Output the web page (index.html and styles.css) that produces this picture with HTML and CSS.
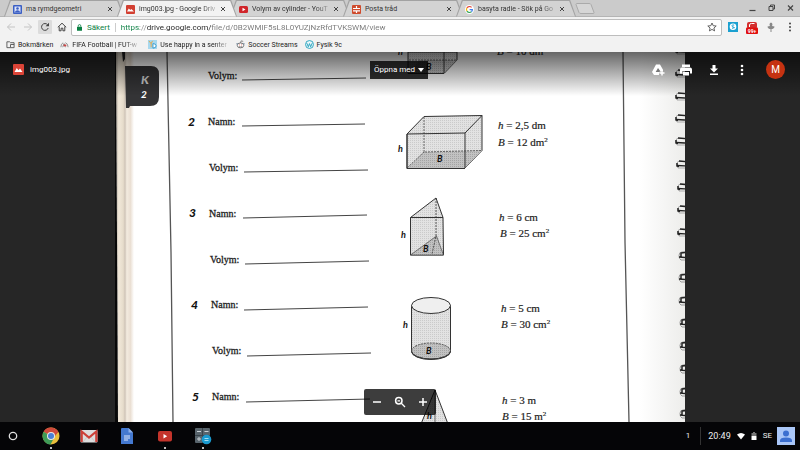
FILE: index.html
```html
<!DOCTYPE html>
<html lang="sv">
<head>
<meta charset="utf-8">
<meta name="viewport" content="width=device-width, initial-scale=1">
<title>img003.jpg - Google Drive</title>
<link rel="stylesheet" href="styles.css">
</head>
<body>
<header class="browser">
  <div class="tabstrip">
    <div class="tab">
      <svg class="favicon" viewBox="0 0 9 9"><rect width="9" height="9" rx="1" fill="#3b5fc4"/><rect x="1.5" y="1.5" width="6" height="6" fill="#dfe6fa"/><circle cx="4.5" cy="3.5" r="1.3" fill="#3b5fc4"/><path d="M2 7.5c0-3 5-3 5 0z" fill="#3b5fc4"/></svg>
      <button class="tab-title">ma rymdgeometri</button>
      <button class="close" aria-label="Stäng"><svg viewBox="0 0 6 6"><path d="M1 1l4 4M5 1L1 5"/></svg></button>
    </div>
    <div class="tab active">
      <svg class="favicon" viewBox="0 0 9 9"><rect width="9" height="9" rx="1" fill="#d23f31"/><path d="M1 6.500l1.800-3 1.500 1.600 1-1.200L8 6.500z" fill="#fff"/></svg>
      <button class="tab-title fade">img003.jpg - Google Driv</button>
      <button class="close" aria-label="Stäng"><svg viewBox="0 0 6 6"><path d="M1 1l4 4M5 1L1 5"/></svg></button>
    </div>
    <div class="tab">
      <svg class="favicon" viewBox="0 0 9 9"><rect y="1" width="9" height="7" rx="1.500" fill="#d0252a"/><path d="M3.500 2.800v3.400l3-1.700z" fill="#fff"/></svg>
      <button class="tab-title fade">Volym av cylinder - YouT</button>
      <button class="close" aria-label="Stäng"><svg viewBox="0 0 6 6"><path d="M1 1l4 4M5 1L1 5"/></svg></button>
    </div>
    <div class="tab">
      <svg class="favicon" viewBox="0 0 9 9"><rect width="9" height="9" rx="1" fill="#cf4b2c"/><path d="M1 3.500h7M1 5.800h7M4.500 1v2.500M4.500 5.500V8" stroke="#fff" stroke-width="1.200"/></svg>
      <button class="tab-title">Posta tråd</button>
      <button class="close" aria-label="Stäng"><svg viewBox="0 0 6 6"><path d="M1 1l4 4M5 1L1 5"/></svg></button>
    </div>
    <div class="tab">
      <svg class="favicon" viewBox="0 0 9 9"><circle cx="4.500" cy="4.500" r="4.500" fill="#fff"/><g fill="none" stroke-width="1.200"><path d="M6.600 2.400A3 3 0 0 0 1.900 3" stroke="#e54335"/><path d="M1.900 3a3 3 0 0 0 0 3" stroke="#f6b704"/><path d="M1.900 6a3 3 0 0 0 4.500.800" stroke="#34a353"/><path d="M6.400 6.800a3 3 0 0 0 1-2.200H4.600" stroke="#4280ef"/></g></svg>
      <button class="tab-title fade">basyta radie - Sök på Go</button>
      <button class="close" aria-label="Stäng"><svg viewBox="0 0 6 6"><path d="M1 1l4 4M5 1L1 5"/></svg></button>
    </div>
    <button class="new-tab" aria-label="Ny flik"><svg viewBox="0 0 20 11"><path d="M1 1.500q0-1 1-1h12q1.500 0 2 1l3 8q.3 1-1 1H6q-1.500 0-2-1z" fill="#d6d6d6" stroke="#aaa"/></svg></button>
    <div class="window-controls">
      <button aria-label="Minimera"><svg viewBox="0 0 8 8"><path d="M1 6.500h6" stroke-width="1.200"/></svg></button>
      <button aria-label="Återställ"><svg viewBox="0 0 8 8"><path d="M1.500 2.500h4v4h-4zM3 2.500V1h4v4H5.500"/></svg></button>
      <button aria-label="Stäng fönster"><svg viewBox="0 0 8 8"><path d="M1.500 1.500l5 5M6.500 1.500l-5 5" stroke-width="1.200"/></svg></button>
    </div>
  </div>
  <div class="toolbar">
    <div class="nav">
      <button class="off" aria-label="Bakåt"><svg viewBox="0 0 10 10"><path d="M9 5H1.500M5 1.500L1.500 5 5 8.500"/></svg></button>
      <button class="off" aria-label="Framåt"><svg viewBox="0 0 10 10"><path d="M1 5h7.500M5 1.500L8.500 5 5 8.500"/></svg></button>
      <button class="pressed" aria-label="Uppdatera"><svg viewBox="0 0 10 10"><path d="M8.200 6A3.400 3.400 0 1 1 7.600 2.800"/><path d="M9 .800v3.400H5.600z" fill="#444" stroke="none"/></svg></button>
      <button aria-label="Hem"><svg viewBox="0 0 10 10"><path d="M.800 5.300L5 1.200l4.200 4.100M2.200 4.500v4.300h1.900V6.200h1.800v2.600h1.900V4.500"/></svg></button>
    </div>
    <div class="omnibox">
      <svg class="lock" viewBox="0 0 6 8"><rect y="3" width="6" height="5" rx=".500" fill="#0b8043"/><path d="M1.500 3V2a1.500 1.500 0 0 1 3 0v1" fill="none" stroke="#0b8043"/></svg>
      <label class="secure" for="url">Säkert</label>
      <input id="url" class="url" type="text" value="https://drive.google.com/file/d/0B2WMIF5sL8L0YUZjNzRfdTVKSWM/view">
      <button class="star" aria-label="Bokmärk"><svg viewBox="0 0 10 10"><path d="M5 1l1.200 2.700 3 .300-2.300 2 .700 2.900L5 7.400 2.400 8.900l.700-2.900L.800 4l3-.300z" fill="none" stroke="#555" stroke-width=".900"/></svg></button>
    </div>
    <div class="extensions">
      <button aria-label="Skype"><svg viewBox="0 0 12 14"><rect x="1" y="2" width="10" height="10" fill="#1ba0d0"/><circle cx="6" cy="6.700" r="3.300" fill="#fff"/><path d="M7.200 5.200Q5 4.300 5 5.700t2 1.600-2 1" fill="none" stroke="#1ba0d0"/></svg></button>
      <button aria-label="Meddelanden"><svg viewBox="0 0 12 14"><rect x="1" y="2" width="10" height="7" rx="2" fill="#d32f2f"/><path d="M3.500 7V5q0-1.500 2-1.500h3" fill="none" stroke="#fff"/><rect y="7.500" width="12" height="6.500" rx="1" fill="#e01010"/><text x="6" y="13" class="badge">99+</text></svg></button>
      <button aria-label="Tillägg"><svg viewBox="0 0 12 14"><path d="M6 2.500c2 1 1.500 2.500 1 3.500l2.500.500c0 2-2 2.500-3 2.500L6.500 12h-1V9c-1 0-3-.500-3-2.500L5 6c-.500-1-1-2.500 1-3.500z" fill="#888"/></svg></button>
      <button aria-label="Meny"><svg viewBox="0 0 12 14"><g fill="#444"><circle cx="6" cy="3.500" r="1"/><circle cx="6" cy="7" r="1"/><circle cx="6" cy="10.500" r="1"/></g></svg></button>
    </div>
  </div>
  <nav class="bookmarks">
    <a href="#"><svg viewBox="0 0 10 10"><path d="M1 2h3l1 1h4v5.500H1zM5 8V5h4" fill="none" stroke="#555"/></svg><span>Bokmärken</span></a>
    <a href="#" class="long"><svg viewBox="0 0 10 10"><path d="M1 8q0-4 2.500-5M3 8l1.500-4L6 8M6 3q3 1 3 5" fill="none" stroke="#888"/><path d="M4 5h3v2H4z" fill="#c44"/></svg><span class="fade">FIFA Football | FUT-w</span></a>
    <a href="#" class="long"><svg viewBox="0 0 10 10"><rect width="10" height="10" fill="#a7d8ee"/><path d="M1 1l2.500 3L5 1M3.500 4v4" fill="none" stroke="#e8a33d"/><path d="M5.500 4v5q3.500 0 3.500-2.500T5.500 4z" fill="#fff" stroke="#2b93c8"/></svg><span class="fade">Use happy in a senter</span></a>
    <a href="#"><svg viewBox="0 0 10 10"><ellipse cx="5" cy="6" rx="3.600" ry="2.700" fill="#fff" stroke="#666"/><circle cx="1.300" cy="4.300" r="1" fill="#89a"/><circle cx="8.700" cy="4.300" r="1" fill="#89a"/><path d="M5 3.300L5.700 1 8 1.500M3.500 7.200q1.500 1 3 0" fill="none" stroke="#666" stroke-width=".800"/><path d="M3.500 5.500h.8M5.800 5.500h.8" stroke="#d43"/></svg><span>Soccer Streams</span></a>
    <a href="#"><svg viewBox="0 0 10 10"><circle cx="5" cy="5" r="4.400" fill="#e8f6f9" stroke="#21a0bd"/><path d="M2 3.500l1.700 4L5 4l1.300 3.500L8 3.500" fill="none" stroke="#21a0bd"/></svg><span>Fysik 9c</span></a>
  </nav>
</header>

<main class="viewer">
  <svg class="scan" viewBox="115 52 570 370" role="img" aria-label="Arbetsblad">
    <defs>
      <pattern id="dots" width="2" height="2" patternUnits="userSpaceOnUse"><rect width="2" height="2" fill="#e2e2e2"/><rect width="1" height="1" fill="#cacaca"/></pattern>
      <pattern id="dense" width="2" height="2" patternUnits="userSpaceOnUse"><rect width="2" height="2" fill="#c2c2c2"/><rect width="1" height="1" fill="#a4a4a4"/></pattern>
      <linearGradient id="spine"><stop offset="0" stop-color="#b5ac9f"/><stop offset=".15" stop-color="#f1e8d9"/><stop offset=".4" stop-color="#e6dccb"/><stop offset=".5" stop-color="#cfc4b8"/><stop offset=".6" stop-color="#f3ebdf"/><stop offset=".8" stop-color="#eadfd3"/><stop offset="1" stop-color="#fff"/></linearGradient>
      <linearGradient id="edge"><stop offset="0" stop-color="#fff"/><stop offset="1" stop-color="#ededeb"/></linearGradient>
      <g id="ring"><path d="M10 1H4Q1 1 1 4t1 4h8" fill="none" stroke="#aaa"/><path d="M3 1l7 .700M1 5.500l9 .500" stroke="#222" stroke-width="1.300"/><path d="M1 3v3l2 .500" fill="none" stroke="#222" stroke-width="1.500"/></g>
      <g id="hook"><path d="M7 1H4Q1 1 1 4.500T3 9h4" fill="none" stroke="#999"/><path d="M3 2l4-.500M3 1.500v5M1 6l6 .500" stroke="#222" stroke-width="1.500"/></g>
    </defs>
    <rect x="115" y="52" width="570" height="370" fill="#fff"/>
    <path d="M116 52h18v370h-16z" fill="url(#spine)"/>
    <path d="M115 52h1l2 370h-3z" fill="#080808"/>
    <rect x="640" y="52" width="45" height="370" fill="url(#edge)"/>
    <path d="M122 52h3v7l-2 3z" fill="#222"/>
    <path d="M125 66h26q8 0 8 8v23q0 9-9 9h-20l-1 2h-3z" fill="#343436"/>
    <g class="tag"><text x="141" y="84" class="tag-letter">K</text><text x="141" y="98" class="tag-number">2</text></g>
    <path d="M167 52l4 200 2 170M623 52l2 190 4 180" fill="none" stroke="#555" stroke-width="1.300"/>

    <g stroke="#444" stroke-width="1">
      <path d="M242 80l124-2M242 126l123-2M244 172l124-2M243 218l124-3M245 264l124-3M244 310l124-3M247 356l124-3M246 402l124-3"/>
    </g>
    <g class="label">
      <text x="208" y="79">Volym:</text>
      <text x="208" y="125">Namn:</text><text x="209" y="171">Volym:</text>
      <text x="209" y="217">Namn:</text><text x="210" y="263">Volym:</text>
      <text x="211" y="308">Namn:</text><text x="212" y="354">Volym:</text>
      <text x="212" y="400">Namn:</text>
    </g>
    <g class="number">
      <text x="188" y="126">2</text><text x="189" y="217">3</text><text x="191" y="309">4</text><text x="192" y="401">5</text>
    </g>
    <g class="formula">
      <text x="497" y="55"><tspan class="var">B</tspan> = 10 dm</text>
      <text x="498" y="129"><tspan class="var">h</tspan> = 2,5 dm</text><text x="498" y="146"><tspan class="var">B</tspan> = 12 dm<tspan class="sup" dy="-4">2</tspan></text>
      <text x="499" y="221"><tspan class="var">h</tspan> = 6 cm</text><text x="500" y="237"><tspan class="var">B</tspan> = 25 cm<tspan class="sup" dy="-4">2</tspan></text>
      <text x="501" y="312"><tspan class="var">h</tspan> = 5 cm</text><text x="501" y="328"><tspan class="var">B</tspan> = 30 cm<tspan class="sup" dy="-4">2</tspan></text>
      <text x="502" y="404"><tspan class="var">h</tspan> = 3 m</text><text x="502" y="420"><tspan class="var">B</tspan> = 15 m<tspan class="sup" dy="-4">2</tspan></text>
    </g>

    <g stroke="#333" stroke-width="1" stroke-linejoin="round">
      <path d="M408 52h49v8l-13 13.500h-36z" fill="url(#dots)"/>
      <path d="M408 73l12-13h37l-13 13z" fill="url(#dense)" stroke="none"/><path d="M444 52v21" /><path d="M409 60h48" stroke-dasharray="2 1" stroke-width=".700"/>

      <path d="M407 134l17-17.500 58-1v35L465 168l-58 .500z" fill="url(#dots)"/>
      <path d="M407 168.500L424 152l58-1.500L465 168z" fill="url(#dense)" stroke="none"/>
      <path d="M407 134l58-1v35M465 133l17-17.500M407 134v34.500h58" fill="none"/>
      <path d="M424 117v35l58-1.500M424 152l-17 16" fill="none" stroke-dasharray="2 1" stroke-width=".700"/>

      <path d="M410.500 217.500L436 198l7 19.500.5 37.500h-33z" fill="url(#dots)"/>
      <path d="M410.500 255L436.500 236l7 19z" fill="url(#dense)" stroke-width=".600"/>
      <path d="M410.500 217.500H443" fill="none"/><path d="M436 198v38l-4 18" fill="none" stroke-dasharray="2 1" stroke-width=".800"/>

      <path d="M411.500 305.500v46a19.500 8 0 0 0 39 0v-46z" fill="url(#dots)"/>
      <ellipse cx="431" cy="351" rx="19.500" ry="8" fill="url(#dense)" stroke-width=".800" stroke-dasharray="2 1"/>
      <ellipse cx="431" cy="305.500" rx="19.500" ry="8" fill="#efefef"/>
      <path d="M411.500 351a19.500 8 0 0 0 39 0" fill="none"/>

      <path d="M435 390l-14 34h27z" fill="url(#dots)"/><path d="M435 390v32" stroke-width=".700"/>
    </g>
    <g class="mark">
      <text x="398" y="55">h</text><text x="426" y="70">B</text>
      <text x="398" y="152">h</text><text x="437" y="162">B</text>
      <text x="401" y="238">h</text><text x="423" y="252">B</text>
      <text x="403" y="328">h</text><text x="426" y="354">B</text>
      <text x="427" y="419">h</text>
    </g>
    <g>
      <use href="#ring" x="675" y="46"/><use href="#ring" x="675" y="69"/><use href="#ring" x="675" y="92"/><use href="#ring" x="675" y="114"/><use href="#ring" x="675" y="137"/><use href="#ring" x="676" y="160"/><use href="#ring" x="677" y="183"/><use href="#ring" x="677" y="205"/><use href="#ring" x="677" y="228"/>
      <use href="#hook" x="678" y="251"/><use href="#hook" x="678" y="273"/><use href="#hook" x="678" y="296"/><use href="#hook" x="679" y="318"/><use href="#hook" x="679" y="341"/><use href="#hook" x="679" y="364"/><use href="#hook" x="679" y="387"/><use href="#hook" x="679" y="409"/>
    </g>
  </svg>

  <div class="viewer-bar">
    <div class="file">
      <svg viewBox="0 0 11 11"><rect width="11" height="11" rx="1" fill="#db4437"/><path d="M1.500 8l2.300-4 1.700 2.300L7 4.500 9.500 8z" fill="#fff"/></svg>
      <span>img003.jpg</span>
    </div>
    <button class="open-with">Öppna med <svg viewBox="0 0 6 4"><path d="M0 0h6L3 4z" fill="#fff"/></svg></button>
    <div class="actions">
      <button aria-label="Lägg till i Drive"><svg viewBox="0 0 14 14"><path d="M5 1.500h4l3 5.300V8H9.500v1.500H8V12H3L1 9z" fill="#fff"/><path d="M7 5L4.700 9h3.800l.700-1z" fill="#777"/><path d="M11 7.500v5M8.500 10h5" stroke="#fff" stroke-width="1.500"/></svg></button>
      <button aria-label="Skriv ut"><svg viewBox="0 0 14 14"><path d="M3 1.500h8V4H3zM3 4.500h8a2 2 0 0 1 2 2v4h-2V8H3v2.500H1v-4a2 2 0 0 1 2-2zM4 9h6v3.500H4z" fill="#fff"/></svg></button>
      <button aria-label="Ladda ned"><svg viewBox="0 0 14 14"><path d="M5.500 2h3v3.500H11l-4 4-4-4h2.500zM3 10.500h8V12H3z" fill="#fff"/></svg></button>
      <button aria-label="Fler åtgärder"><svg viewBox="0 0 14 14"><g fill="#fff"><circle cx="7" cy="3" r="1.300"/><circle cx="7" cy="7" r="1.300"/><circle cx="7" cy="11" r="1.300"/></g></svg></button>
      <button class="account">M</button>
    </div>
  </div>

  <div class="zoombar">
    <button aria-label="Zooma ut"><svg viewBox="0 0 12 12"><path d="M2 6h8"/></svg></button>
    <button aria-label="Anpassa"><svg viewBox="0 0 12 12"><circle cx="4.800" cy="4.800" r="3.200"/><path d="M7.300 7.300L11 11M3.500 4.800h2.600" stroke-width="1.300"/></svg></button>
    <button aria-label="Zooma in"><svg viewBox="0 0 12 12"><path d="M2 6h8M6 2v8"/></svg></button>
  </div>
</main>

<footer class="shelf">
  <div class="apps">
    <button aria-label="Startprogram"><svg viewBox="0 0 20 20"><circle cx="10" cy="10" r="3.700" fill="none" stroke="#e0e0e0" stroke-width="1.300"/></svg></button>
    <button class="running" aria-label="Chrome"><svg viewBox="0 0 20 20"><circle cx="10" cy="10" r="8.500" fill="#eabf3c"/><path d="M10 10L2.600 5.800A8.500 8.500 0 0 1 17.400 6z" fill="#cf4a3c"/><path d="M10 10L2.600 5.800A8.500 8.500 0 0 0 9.500 18.500L13 12z" fill="#3f9b57"/><path d="M10 6h7.400l-3.400 4z" fill="#cf4a3c"/><circle cx="10" cy="10" r="4" fill="#e8e8e8"/><circle cx="10" cy="10" r="3" fill="#4a80d6"/></svg></button>
    <button aria-label="Gmail"><svg viewBox="0 0 20 20"><rect x="1.500" y="4" width="17" height="12.500" rx="1" fill="#ddd"/><path d="M2.700 16V5.500L10 11.500l7.300-6V16" fill="none" stroke="#cc4038" stroke-width="2.200"/><path d="M4 16l4-5M16 16l-4-5" stroke="#bbb" stroke-width=".600"/></svg></button>
    <button aria-label="Dokument"><svg viewBox="0 0 20 20"><path d="M5 2h6.500L16 6.500V18H4V3q0-1 1-1z" fill="#4479d0"/><path d="M11.500 2L16 6.500h-4.500z" fill="#8db0ea"/><path d="M7 10h6M7 12h6M7 14h4" stroke="#dfe9fb"/></svg></button>
    <button class="running" aria-label="YouTube"><svg viewBox="0 0 20 20"><rect x="3" y="5" width="14" height="10.500" rx="2" fill="#c4342b"/><path d="M8.500 8v4.500l3.700-2.200z" fill="#fff"/></svg></button>
    <button class="running" aria-label="Kalkylator"><svg viewBox="0 0 20 20"><rect x="2" y="2" width="15" height="15" rx="1" fill="#58646c"/><path d="M9.500 2v15M2 9.500h15" stroke="#39444b"/><path d="M4 5.500h4M11.500 5.500h4M4 13h4M6 11v4" stroke="#c8d0d4"/><circle cx="13.500" cy="13.500" r="4.800" fill="#1a9bd0"/><path d="M11.500 12.500h4M11.500 14.500h4" stroke="#a5dcf2"/></svg></button>
  </div>
  <div class="status">
    <span class="count">1</span>
    <time>20:49</time>
    <svg viewBox="0 0 8 8"><path d="M0 2.500q4-3 8 0L4 7.500z" fill="#fff"/></svg>
    <svg viewBox="0 0 8 8"><path d="M3 0h2v1h1.500v3h-5V1H3z" fill="#777"/><path d="M1.500 4h5v4h-5z" fill="#fff"/></svg>
    <span>SE</span>
    <button class="user" aria-label="Användare"><svg viewBox="0 0 18 18"><rect width="18" height="18" fill="#a9c6f7"/><circle cx="9" cy="6.500" r="3" fill="#3b6fd0"/><path d="M3 15v-1.500q0-3 6-3t6 3V15z" fill="#3b6fd0"/></svg></button>
  </div>
</footer>
</body>
</html>
```
FILE: styles.css
```css
* { box-sizing: border-box; }

body {
  margin: 0;
  height: 100vh;
  display: flex;
  flex-direction: column;
  overflow: hidden;
  font-family: Roboto, "Liberation Sans", sans-serif;
  font-size: 8px;
  line-height: 12px;
  color: #444;
}

button {
  padding: 0;
  border: 0;
  background: none;
  font: inherit;
  color: inherit;
  display: flex;
  align-items: center;
  justify-content: center;
}

svg { display: block; flex: none; }

/* Browser window */
.browser { flex: none; background: #f2f2f2; }

.tabstrip {
  display: flex;
  align-items: center;
  height: 17px;
  padding-left: 4px;
  background: #cbcbcb;
  border-bottom: 1px solid #b4b4b4;
  font-size: 7px;
}

.tab {
  position: relative;
  z-index: 0;
  display: flex;
  align-items: center;
  flex: 0 1 113px;
  min-width: 0;
  height: 17px;
  padding: 2px 1px 0 9px;
  color: #333;
}

.tab::before,
.tab::after {
  content: "";
  position: absolute;
  z-index: -1;
  inset: 0 -7px 0 0;
  background: #a2a2a2;
  clip-path: polygon(0 100%, 6px 0, calc(100% - 6px) 0, 100% 100%);
}

.tab::after {
  inset: 1px -6px 0 1px;
  background: #d3d3d3;
}

.tab.active { z-index: 2; }
.tab.active::after { background: #f2f2f2; }

.favicon { width: 9px; height: 9px; margin-right: 4px; }

.tab-title {
  flex: 1;
  min-width: 0;
  justify-content: flex-start;
  white-space: nowrap;
}

.fade { mask-image: linear-gradient(to right, #000 80%, rgba(0, 0, 0, 0.2)); }

.close { width: 12px; height: 12px; }
.close svg { width: 6px; height: 6px; stroke: #444; }

.new-tab { margin-left: 6px; }
.new-tab svg { width: 20px; height: 11px; }

.window-controls { display: flex; gap: 10px; margin-left: auto; padding-right: 5px; }
.window-controls svg { width: 9px; height: 8px; fill: none; stroke: #444; }

.toolbar { display: flex; align-items: center; height: 20px; padding: 0 4px; }

.nav { display: flex; gap: 3px; }
.nav button { width: 14px; height: 14px; }
.nav svg { width: 10px; height: 10px; fill: none; stroke: #444; }
.nav .off svg { stroke: #c4c4c4; }
.nav .pressed { background: #dcdcdc; border-radius: 1px; }

.omnibox {
  display: flex;
  align-items: center;
  flex: 1;
  min-width: 0;
  height: 17px;
  margin: 0 5px 0 2px;
  padding: 0 4px 0 5px;
  background: #fff;
  border: 1px solid #bdbdbd;
  border-radius: 2px;
}

.lock { width: 5px; height: 7px; margin-right: 5px; }

.secure {
  padding-right: 5px;
  border-right: 1px solid #ccc;
  line-height: 9px;
  color: #0b8043;
}

.url {
  flex: 1;
  min-width: 0;
  height: 14px;
  margin-left: 5px;
  padding: 0;
  border: 0;
  outline: 0;
  font: inherit;
  color: transparent;
  background: linear-gradient(to right, #0b8043 19px, #888 19px 26px, #222 26px 90px, #777 90px) text;
}

.star svg { width: 10px; height: 10px; }

.extensions { display: flex; gap: 7px; }
.extensions svg { width: 12px; height: 14px; }
.badge { font-size: 5px; font-weight: bold; fill: #fff; text-anchor: middle; }

.bookmarks {
  display: flex;
  align-items: center;
  gap: 7px;
  height: 15px;
  padding: 0 6px;
  font-size: 7px;
}

.bookmarks a {
  display: flex;
  align-items: center;
  gap: 3px;
  color: #222;
  text-decoration: none;
  white-space: nowrap;
}

.bookmarks svg { width: 9px; height: 9px; }
.bookmarks .long { width: 81px; }

/* Image viewer */
.viewer {
  position: relative;
  display: flex;
  justify-content: center;
  flex: 1;
  min-height: 0;
  background: #262626;
  color: #fff;
}

.scan { height: 100%; }

.viewer-bar {
  position: absolute;
  inset: 0 0 auto;
  display: grid;
  grid-template-columns: 1fr auto 1fr;
  align-items: center;
  height: 44px;
  padding: 0 15px 9px 13px;
  background: linear-gradient(rgba(0, 0, 0, 0.6), rgba(0, 0, 0, 0));
}

.file { display: flex; align-items: center; gap: 6px; }
.file svg { width: 11px; height: 11px; }

.open-with {
  gap: 3px;
  height: 18px;
  padding: 0 4px;
  background: rgba(0, 0, 0, 0.8);
}

.open-with svg { width: 6px; height: 4px; }

.actions { display: flex; align-items: center; justify-content: flex-end; gap: 14px; }
.actions svg { width: 14px; height: 14px; }

.account {
  width: 19px;
  height: 19px;
  margin-left: 3px;
  border-radius: 50%;
  background: #c53211;
  font-size: 10px;
}

.zoombar {
  position: absolute;
  bottom: 7px;
  left: 50%;
  transform: translateX(-50%);
  display: flex;
  align-items: center;
  gap: 11px;
  height: 26px;
  padding: 0 7px;
  border-radius: 2px;
  background: rgba(0, 0, 0, 0.76);
}

.zoombar svg { width: 12px; height: 12px; fill: none; stroke: #fff; stroke-width: 1.5; }

/* Scanned worksheet */
.label,
.formula { font-family: "Liberation Serif", serif; fill: #222; stroke: #222; }
.label { font-size: 10px; stroke-width: 0.3; }
.formula { font-size: 11px; stroke-width: 0.2; }
.var { font-style: italic; }
.sup { font-size: 7px; }
.number,
.tag,
.mark { font-family: Lato, "Liberation Sans", sans-serif; font-style: italic; font-weight: bold; fill: #111; }
.number { font-size: 12px; font-weight: 900; }
.mark { font-size: 9px; }
.tag { fill: #fff; font-weight: 900; }
.tag-letter { font-size: 12px; fill: #ccc; }
.tag-number { font-size: 10px; }

/* System shelf */
.shelf {
  display: flex;
  align-items: center;
  justify-content: space-between;
  flex: none;
  height: 28px;
  padding: 0 5px 0 3px;
  background: #050507;
  color: #eee;
}

.apps { display: flex; gap: 18px; }
.apps button { position: relative; height: 28px; }
.apps svg { width: 20px; height: 20px; }

.running::after {
  content: "";
  position: absolute;
  bottom: 1px;
  width: 2px;
  height: 2px;
  border-radius: 50%;
  background: #fff;
}

.status { display: flex; align-items: center; gap: 5px; }
.status svg { width: 8px; height: 8px; }
.count { margin-right: 2px; padding-right: 10px; border-right: 1px solid #333; line-height: 18px; }
.status time { font-size: 9px; margin-right: 1px; }
.status .user svg { width: 18px; height: 18px; }
```
